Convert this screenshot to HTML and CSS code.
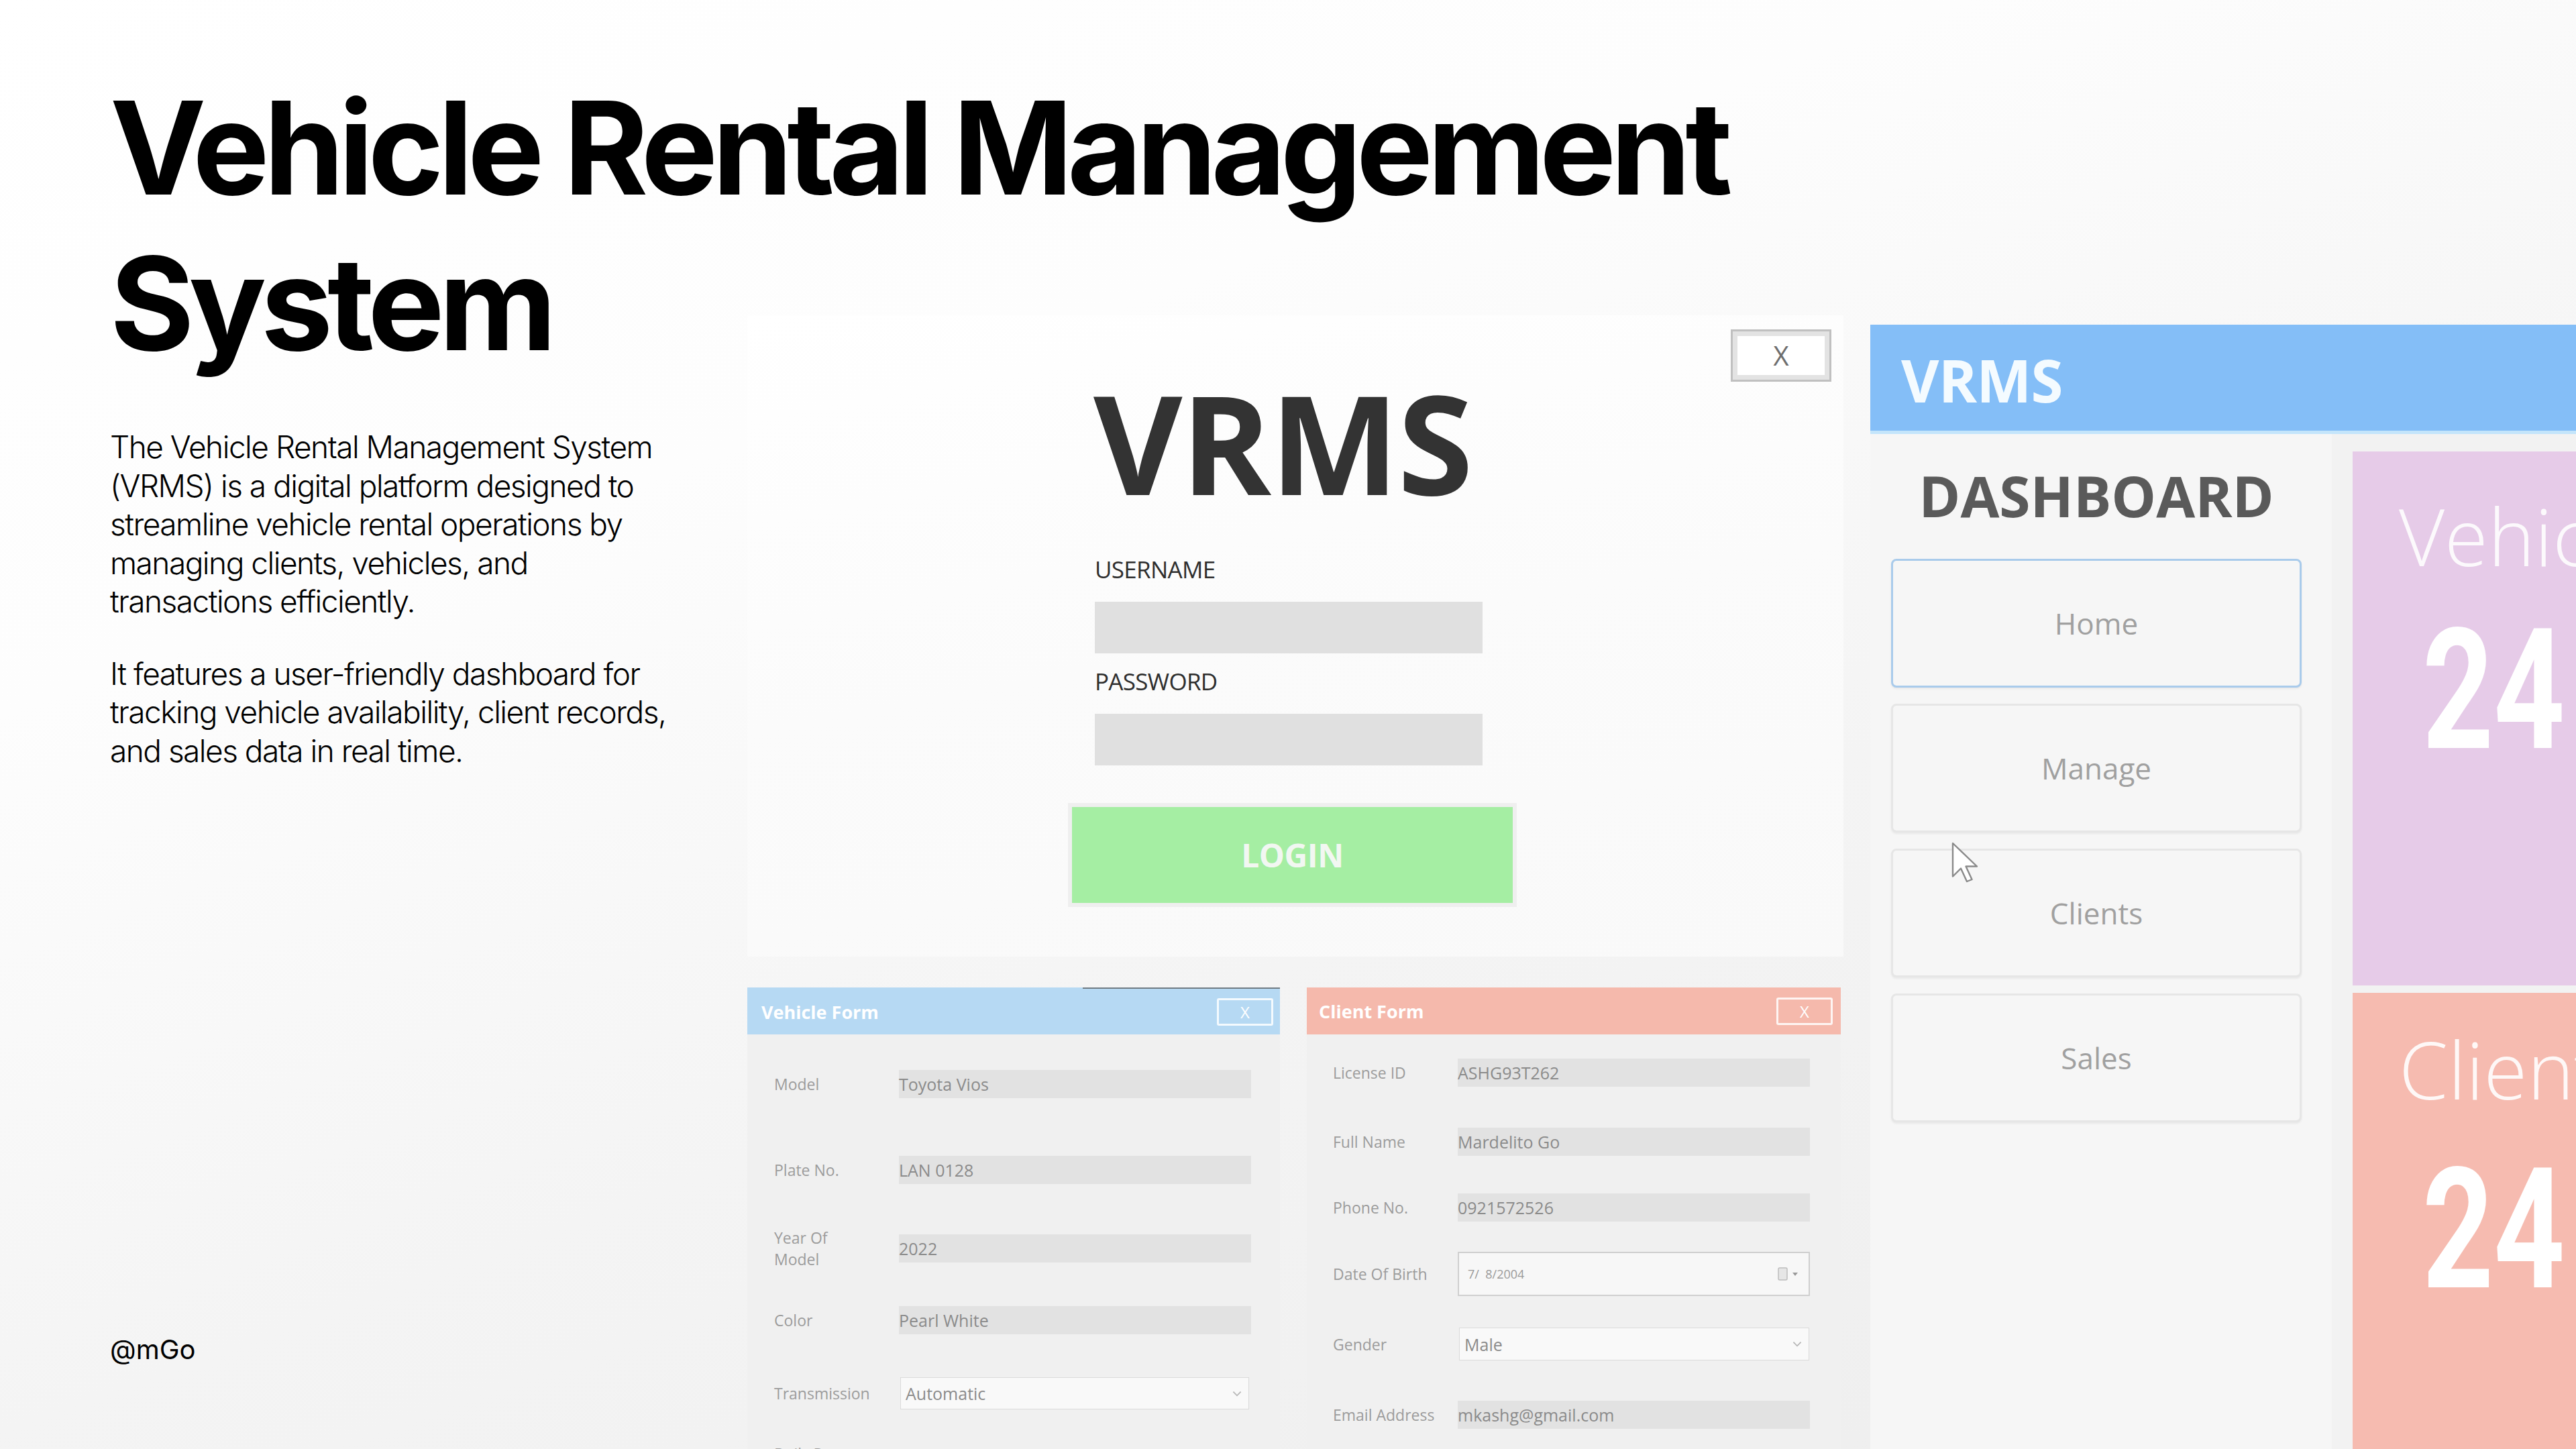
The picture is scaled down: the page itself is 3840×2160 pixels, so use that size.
FILE: index.html
```html
<!DOCTYPE html>
<html lang="en">
<head>
<meta charset="utf-8">
<title>Vehicle Rental Management System</title>
<link rel="stylesheet" href="styles.css">
</head>
<body>
<div class="page">
  <section class="intro">
    <h1 class="title"><span class="title-line">Vehicle Rental Management</span> <span class="title-line">System</span></h1>
    <div class="desc">
      <p>The Vehicle Rental Management System (VRMS) is a digital platform designed to streamline vehicle rental operations by managing clients, vehicles, and transactions efficiently.</p>
      <p>It features a user-friendly dashboard for tracking vehicle availability, client records, and sales data in real time.</p>
    </div>
    <div class="handle">@mGo</div>
  </section>

  <section class="collage">
    <div class="stack">
      <div class="login">
        <div class="login-close">X</div>
        <div class="login-form">
          <div class="login-logo">VRMS</div>
          <div class="login-label">USERNAME</div>
          <div class="login-input"></div>
          <div class="login-label">PASSWORD</div>
          <div class="login-input"></div>
          <div class="login-btn"><span>LOGIN</span></div>
        </div>
      </div>

      <div class="forms">
        <div class="form form-vehicle">
          <div class="form-head"><span>Vehicle Form</span><span class="form-x">X</span></div>
          <div class="form-body">
            <div class="row"><span class="lbl">Model</span><span class="val">Toyota Vios</span></div>
            <div class="row"><span class="lbl">Plate No.</span><span class="val">LAN 0128</span></div>
            <div class="row"><span class="lbl">Year Of<br>Model</span><span class="val">2022</span></div>
            <div class="row"><span class="lbl">Color</span><span class="val">Pearl White</span></div>
            <div class="row"><span class="lbl">Transmission</span><span class="combo combo-trans">Automatic<svg class="chev" viewBox="0 0 10 6"><path d="M1 1l4 4 4-4" fill="none" stroke="#b5b5b5" stroke-width="1.2"/></svg></span></div>
            <div class="row"><span class="lbl">Daily Rate</span></div>
          </div>
        </div>

        <div class="form form-client">
          <div class="form-head"><span>Client Form</span><span class="form-x">X</span></div>
          <div class="form-body">
            <div class="row"><span class="lbl">License ID</span><span class="val">ASHG93T262</span></div>
            <div class="row"><span class="lbl">Full Name</span><span class="val">Mardelito Go</span></div>
            <div class="row"><span class="lbl">Phone No.</span><span class="val">0921572526</span></div>
            <div class="row"><span class="lbl">Date Of Birth</span><span class="date">7/&nbsp; 8/2004<svg class="cal" viewBox="0 0 34 22"><rect x="1" y="2" width="13" height="18" rx="2" fill="#e6e6e6" stroke="#bdbdbd" stroke-width="1.5"/><path d="M22 9h8l-4 5z" fill="#9a9a9a"/></svg></span></div>
            <div class="row"><span class="lbl">Gender</span><span class="combo combo-gender">Male<svg class="chev" viewBox="0 0 10 6"><path d="M1 1l4 4 4-4" fill="none" stroke="#b5b5b5" stroke-width="1.2"/></svg></span></div>
            <div class="row"><span class="lbl">Email Address</span><span class="val">mkashg@gmail.com</span></div>
          </div>
        </div>
      </div>
    </div>

    <div class="dash">
      <div class="dash-head">VRMS</div>
      <div class="dash-body">
        <div class="side">
          <div class="side-title">DASHBOARD</div>
          <div class="nav nav-active">Home</div>
          <div class="nav">Manage</div>
          <div class="nav">Clients</div>
          <div class="nav">Sales</div>
        </div>
        <div class="tiles">
          <div class="tile tile-vehicle">
            <div class="tile-label">Vehicles</div>
            <div class="tile-num">24</div>
          </div>
          <div class="tile tile-client">
            <div class="tile-label">Clients</div>
            <div class="tile-num">24</div>
          </div>
        </div>
      </div>
      <svg class="cursor" viewBox="0 0 28 42"><path d="M2 2v33l8-8 6 13 5-2-6-13h11z" fill="#ffffff" stroke="#8a8a8a" stroke-width="1.6" stroke-linejoin="round"/></svg>
    </div>
  </section>
</div>
</body>
</html>
```

FILE: styles.css
```css
* { box-sizing: border-box; }
html, body { margin: 0; padding: 0; }
body {
  width: 3840px;
  height: 2160px;
  overflow: hidden;
  background: linear-gradient(160deg, #ffffff 0%, #fdfdfd 30%, #f4f4f4 60%, #ededed 100%);
  font-family: "Open Sans", "Liberation Sans", sans-serif;
}
.page {
  display: flex;
  width: 3840px;
  height: 2160px;
  overflow: hidden;
}

/* ---------- intro column ---------- */
.intro {
  flex: 0 0 1114px;
  min-width: 0;
  display: flex;
  flex-direction: column;
  padding: 104px 0 124px 164px;
  font-family: "Inter", "Liberation Sans", sans-serif;
  color: #000;
}
.title {
  margin: 0;
  font-size: 192px;
  line-height: 232px;
  font-weight: 700;
  letter-spacing: -0.043em;
}
.title-line {
  display: block;
  width: max-content;
  white-space: nowrap;
}
.desc {
  width: 860px;
  margin-top: 70px;
}
.desc p {
  margin: 0 0 50px 0;
  font-size: 46px;
  line-height: 57.5px;
  font-weight: 300;
  letter-spacing: -0.033em;
}
.handle {
  margin-top: auto;
  font-size: 40px;
  line-height: 48px;
}

/* ---------- collage ---------- */
.collage {
  flex: 0 0 auto;
  display: flex;
  gap: 40px;
  padding-top: 470px;
}
.stack {
  flex: 0 0 1634px;
  display: flex;
  flex-direction: column;
}

/* login window */
.login {
  flex: 0 0 956px;
  background: linear-gradient(170deg, #ffffff 0%, #fbfbfb 50%, #f9f9f9 100%);
  display: flex;
  flex-direction: column;
}
.login-close {
  align-self: flex-end;
  margin: 21px 18px 0 0;
  width: 150px;
  height: 78px;
  border: 3px solid #c0c0c0;
  box-shadow: inset 0 0 0 7px #e3e3e3;
  background: #ffffff;
  color: #6e6e6e;
  font-size: 40px;
  line-height: 72px;
  text-align: center;
}
.login-form {
  display: flex;
  flex-direction: column;
  align-items: flex-start;
  padding-left: 518px;
  margin-top: -10px;
}
.login-logo {
  font-size: 204px;
  line-height: 200px;
  font-weight: 700;
  color: #333333;
  letter-spacing: -0.01em;
  margin-left: -2px;
}
.login-label {
  font-size: 35px;
  line-height: 48px;
  color: #2e2e2e;
  letter-spacing: -0.02em;
  margin-top: 66px;
}
.login-input {
  width: 578px;
  height: 77px;
  background: #e0e0e0;
  margin-top: 24px;
}
.login-input + .login-label { margin-top: 18px; }
.login-btn {
  margin: 56px 0 0 -40px;
  width: 669px;
  height: 155px;
  border: 6px solid #efefef;
  background: #a5eea3;
  display: flex;
  align-items: center;
  justify-content: center;
  color: #f2f7f2;
  font-size: 48px;
  font-weight: 700;
  letter-spacing: -0.01em;
}

/* forms */
.forms {
  flex: 0 0 auto;
  display: flex;
  gap: 40px;
  margin-top: 46px;
}
.form {
  height: 720px;
  background: #f0f0f0;
  display: flex;
  flex-direction: column;
}
.form-vehicle { flex: 0 0 794px; }
.form-client { flex: 0 0 796px; }
.form-head {
  flex: 0 0 70px;
  display: flex;
  align-items: center;
  justify-content: space-between;
  padding: 0 10px 0 21px;
  color: #ffffff;
  font-size: 27px;
  font-weight: 700;
}
.form-vehicle .form-head {
  background: #b6d9f3;
  border-top: 2px solid;
  border-image: linear-gradient(to right, transparent 63%, #6f7b84 63%) 1;
}
.form-client .form-head {
  background: #f5b9ac;
  padding: 0 12px 0 18px;
}
.form-x {
  width: 84px;
  height: 41px;
  border: 3px solid rgba(255, 255, 255, 0.85);
  border-radius: 3px;
  font-size: 24px;
  font-weight: 400;
  line-height: 35px;
  text-align: center;
}
.form-body {
  display: grid;
  grid-template-columns: 186px 525px;
  padding-left: 40px;
}
.form-vehicle .form-body { grid-template-rows: 148px 107px 127px 88px 130px 50px; }
.form-client .form-body {
  grid-template-rows: 114px 91px 105px 93px 117px 93px;
  padding-left: 39px;
}
.row { display: contents; }
.lbl {
  align-self: center;
  font-size: 23px;
  line-height: 32px;
  color: #9c9c9c;
}
.val {
  align-self: center;
  height: 42px;
  background: #e2e2e2;
  color: #8b8b8b;
  font-size: 25px;
  line-height: 42px;
  white-space: nowrap;
}
.combo {
  align-self: center;
  display: flex;
  align-items: center;
  justify-content: space-between;
  background: #f9f9f9;
  border: 1px solid #dadada;
  color: #8b8b8b;
  font-size: 25px;
  padding: 0 10px 0 7px;
}
.combo-trans { height: 48px; width: 520px; margin-left: 2px; }
.combo-gender { height: 49px; width: 522px; margin-left: 2px; }
.chev { width: 14px; height: 9px; }
.date {
  align-self: center;
  height: 66px;
  display: flex;
  align-items: center;
  justify-content: space-between;
  background: #f7f7f7;
  border: 2px solid #cfcfcf;
  padding: 0 12px 0 13px;
  color: #9a9a9a;
  font-size: 18px;
}
.cal { width: 34px; height: 22px; }

/* dashboard */
.dash {
  position: relative;
  flex: 0 0 1300px;
  margin-top: 14px;
  display: flex;
  flex-direction: column;
}
.dash-head {
  flex: 0 0 auto;
  height: 163px;
  min-height: 0;
  overflow: visible;
  background: #84bef7;
  border-bottom: 5px solid #c4e5fb;
  padding-left: 46px;
  color: #f4fbff;
  font-size: 87px;
  font-weight: 700;
  line-height: 158px;
  padding-top: 3px;
  letter-spacing: -0.01em;
}
.dash-body {
  flex: 1;
  display: flex;
}
.side {
  flex: 0 0 688px;
  background: #f6f6f6;
  padding: 42px 45px 0 31px;
  display: flex;
  flex-direction: column;
}
.side-title {
  text-align: center;
  font-size: 84px;
  line-height: 100px;
  font-weight: 700;
  color: #5a5a5a;
  margin-bottom: 44px;
}
.nav {
  flex: 0 0 192px;
  margin-bottom: 24px;
  border: 3px solid #e6e6e6;
  border-radius: 8px;
  background: #f6f6f6;
  box-shadow: 0 2px 3px rgba(0, 0, 0, 0.06);
  display: flex;
  align-items: center;
  justify-content: center;
  color: #a0a0a0;
  font-size: 44px;
}
.nav-active {
  border-color: #a9cbeb;
}
.tiles {
  flex: 1;
  background: #f2f2f2;
  padding: 26px 0 0 31px;
  display: flex;
  flex-direction: column;
  gap: 11px;
}
.tile {
  flex-shrink: 0;
  display: flex;
  flex-direction: column;
  align-items: flex-start;
  color: #ffffff;
}
.tile-vehicle { height: 796px; background: #e6cbe8; }
.tile-client { height: 900px; background: #f6bbb0; }
.tile-label {
  padding-left: 69px;
  font-size: 118px;
  line-height: 142px;
  font-weight: 300;
  white-space: nowrap;
  opacity: 0.9;
}
.tile-vehicle .tile-label { margin-top: 55px; }
.tile-client .tile-label { margin-top: 43px; }
.tile-num {
  margin-left: 104px;
  font-family: "Roboto", "Liberation Sans", sans-serif;
  font-size: 250px;
  line-height: 250px;
  font-weight: 700;
  transform: scaleX(0.74);
  transform-origin: left center;
}
.tile-vehicle .tile-num { margin-top: 35px; }
.tile-client .tile-num { margin-top: 44px; }
.cursor {
  position: absolute;
  left: 120px;
  top: 770px;
  width: 42px;
  height: 63px;
}
```
